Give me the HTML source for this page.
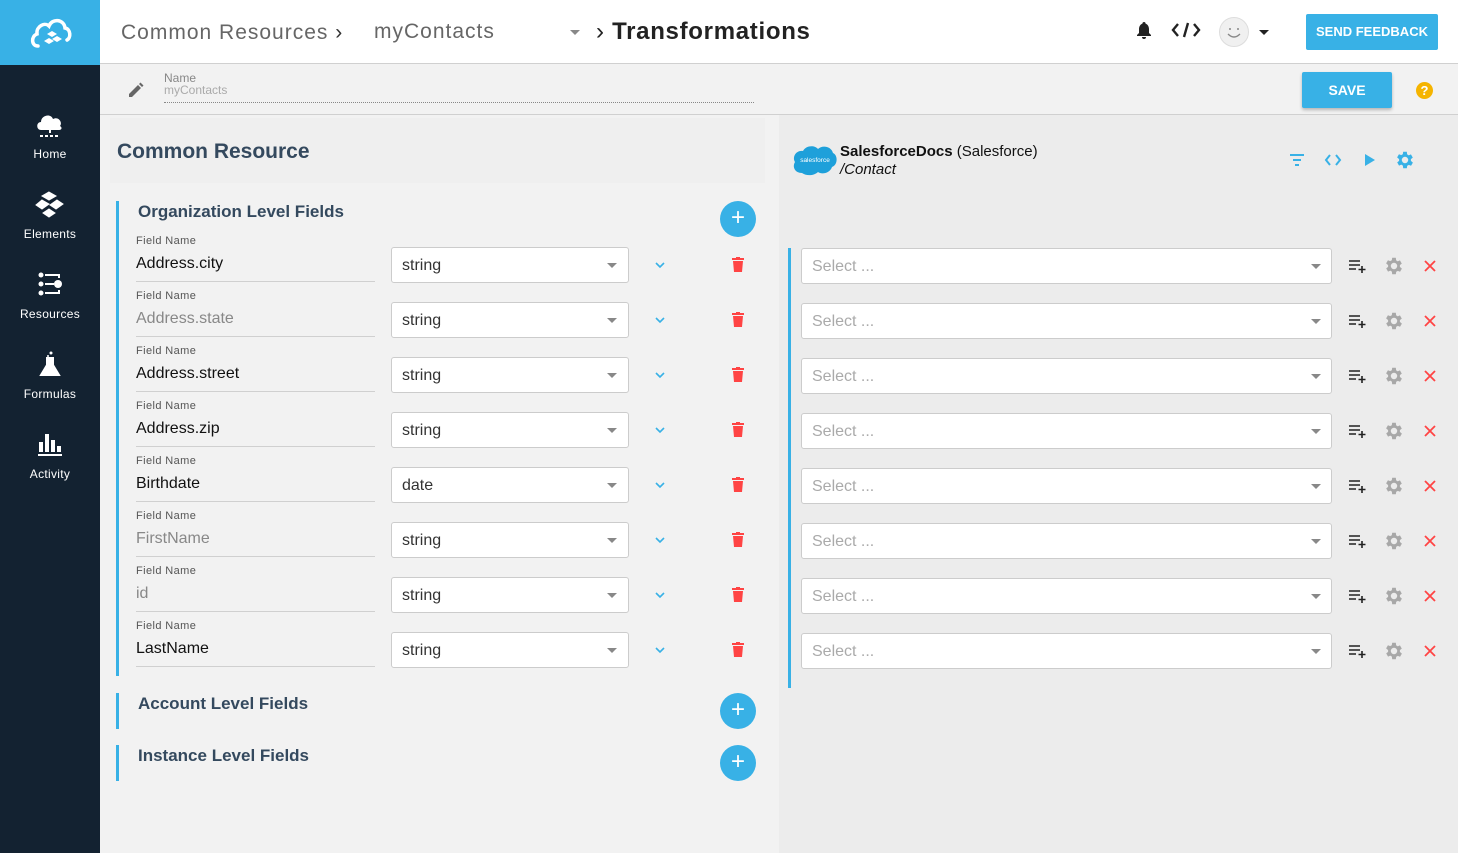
<!DOCTYPE html>
<html><head><meta charset="utf-8"><style>
*{box-sizing:border-box;margin:0;padding:0}
body{width:1458px;height:853px;overflow:hidden;font-family:"Liberation Sans",sans-serif;background:#f2f2f2;position:relative}
.a{position:absolute}
.side{left:0;top:0;width:100px;height:853px;background:#132231}
.logo{left:0;top:0;width:100px;height:65px;background:#38b1e6}
.nav{width:100px;text-align:center;color:#fff;font-size:12px;letter-spacing:.3px}
.hdr{left:100px;top:0;width:1358px;height:64px;background:#fff;border-bottom:1px solid #d0d0d0}
.btn{background:#38b1e6;color:#fff;font-weight:bold;font-size:14px;text-align:center;border-radius:2px}
.lbl{font-size:11px;color:#555;letter-spacing:.4px}
.val{font-size:16px;color:#111}
.ul{height:1px;background:#d0d0d0;width:239px}
.sel{background:#fff;border:1px solid #ccc;border-radius:3px;height:36px;font-size:16px;color:#333;padding:9px 10px}
.tri{width:0;height:0;border-left:5px solid transparent;border-right:5px solid transparent;border-top:5px solid #888}
.plus{width:36px;height:36px;border-radius:50%;background:#38b1e6;color:#fff;font-size:24px;line-height:34px;text-align:center}
.h3{font-size:17px;font-weight:bold;color:#34495e}
.bar{width:3px;background:#38b1e6}
</style></head><body>
<div class="a side"></div>
<div class="a logo"><svg class="a" style="left:30px;top:14px" width="42" height="38" viewBox="0 0 42 38"><path d="M8 32 C1 32 1 22 7 20 C6 12 15 8 19 12 C22 4 34 5 35 14 C41 15 41 24 37 26" fill="none" stroke="#fff" stroke-width="3.5" stroke-linecap="round"/><path d="M17 20 l5 -3 5 3 -5 3z M22 25 l5 -3 5 3 -5 3z M14 27 l5 -3 5 3 -5 3z" fill="#fff"/></svg></div>
<div class="a nav" style="top:110px"><svg width="30" height="30" viewBox="0 0 30 30"><path d="M6 20 C1 20 1 12 6 12 C6 5 16 3 18 9 C23 6 28 12 25 16 C28 18 26 20 24 20Z" fill="#fff"/><path d="M15 20v5M5 26h20" stroke="#fff" stroke-width="2" stroke-dasharray="3 2"/></svg><div style="margin-top:4px">Home</div></div>
<div class="a nav" style="top:190px"><svg width="30" height="30" viewBox="0 0 30 30"><path d="M14 2l7 4-7 4-7-4z M7 10l7 4-7 5-6-4z M22 10l6 4-7 5-6-4z M14 19l6 4-6 4-6-4z" fill="#fff" stroke="#fff" stroke-width="1"/></svg><div style="margin-top:4px">Elements</div></div>
<div class="a nav" style="top:270px"><svg width="30" height="30" viewBox="0 0 30 30"><circle cx="6" cy="5" r="2.5" fill="#fff"/><circle cx="6" cy="14" r="2.5" fill="#fff"/><circle cx="6" cy="23" r="2.5" fill="#fff"/><circle cx="23" cy="14" r="4" fill="#fff"/><path d="M10 5h14v3M10 14h9M10 23h14v-3" stroke="#fff" stroke-width="2" fill="none"/></svg><div style="margin-top:4px">Resources</div></div>
<div class="a nav" style="top:350px"><svg width="30" height="30" viewBox="0 0 30 30"><circle cx="16" cy="3" r="1.5" fill="#fff"/><circle cx="13" cy="6" r="1" fill="#fff"/><path d="M11 8h8M12 8v7l-6 10h18l-6-10v-7" fill="#fff" stroke="#fff" stroke-width="2"/></svg><div style="margin-top:4px">Formulas</div></div>
<div class="a nav" style="top:430px"><svg width="30" height="30" viewBox="0 0 30 30"><rect x="4" y="12" width="4" height="10" fill="#fff"/><rect x="10" y="4" width="4" height="18" fill="#fff"/><rect x="16" y="10" width="4" height="12" fill="#fff"/><rect x="22" y="16" width="4" height="6" fill="#fff"/><rect x="3" y="24" width="24" height="2" fill="#fff"/></svg><div style="margin-top:4px">Activity</div></div>

<div class="a hdr"></div>
<div class="a" style="left:121px;top:21px;font-size:21px;color:#666;letter-spacing:1px">Common Resources <span style="color:#333">›</span></div>
<div class="a" style="left:374px;top:20px;font-size:21px;color:#666;letter-spacing:1px">myContacts</div>
<div class="a tri" style="left:570px;top:30px;border-top-color:#888"></div>
<div class="a" style="left:596px;top:18px;font-size:24px;color:#222;font-weight:bold;letter-spacing:.7px"><span style="font-weight:normal">›</span> Transformations</div>
<svg class="a" style="left:1134px;top:20px" width="20" height="20" viewBox="0 0 20 20"><path d="M10 2a1.5 1.5 0 0 1 1.5 1.5C14 4.5 15 7 15 9v4l2 2v1H3v-1l2-2V9c0-2 1-4.5 3.5-5.5A1.5 1.5 0 0 1 10 2zM8 17h4a2 2 0 0 1-4 0z" fill="#222"/></svg>
<svg class="a" style="left:1171px;top:22px" width="30" height="16" viewBox="0 0 30 16"><path d="M7 2L2 8l5 6M23 2l5 6-5 6M17 1l-4 14" stroke="#222" stroke-width="2.4" fill="none"/></svg>
<div class="a" style="left:1219px;top:17px;width:30px;height:30px;border-radius:50%;background:#f0f0f0;border:1px solid #ddd"><svg width="28" height="28" viewBox="0 0 28 28"><circle cx="10" cy="11" r="1" fill="#888"/><circle cx="18" cy="11" r="1" fill="#888"/><path d="M8 16q6 6 12 0" stroke="#888" fill="none" stroke-width="1.3"/></svg></div>
<div class="a tri" style="left:1259px;top:30px;border-top-color:#222"></div>
<div class="a btn" style="left:1306px;top:14px;width:132px;height:36px;line-height:36px;font-size:13px">SEND FEEDBACK</div>

<div class="a" style="left:100px;top:65px;width:1358px;height:50px;background:#f2f2f2;border-bottom:1px solid #d0d0d0"></div>
<svg class="a" style="left:127px;top:81px" width="18" height="18" viewBox="0 0 18 18"><path d="M2 13v3h3l9-9-3-3z M12 3l3 3 1.5-1.5-3-3z" fill="#666"/></svg>
<div class="a" style="left:164px;top:71px;font-size:12px;color:#888">Name</div>
<div class="a" style="left:164px;top:83px;font-size:12px;color:#aaa">myContacts</div>
<div class="a" style="left:164px;top:102px;width:590px;border-top:1px dotted #888"></div>
<div class="a btn" style="left:1302px;top:72px;width:90px;height:36px;line-height:36px;box-shadow:0 2px 3px rgba(0,0,0,.25)">SAVE</div>
<div class="a" style="left:1416px;top:82px;width:17px;height:17px;border-radius:50%;background:#f5b400;color:#fff;font-size:13px;font-weight:bold;text-align:center;line-height:17px">?</div>

<div class="a" style="left:779px;top:115px;width:679px;height:738px;background:#ececec"></div>
<div class="a" style="left:110px;top:118px;width:655px;height:65px;background:#efefef"></div>
<div class="a" style="left:117px;top:140px;font-size:21px;font-weight:bold;color:#34495e">Common Resource</div>

<div class="a bar" style="left:116px;top:201px;height:475px"></div>
<div class="a h3" style="left:138px;top:202px">Organization Level Fields</div>
<div class="a plus" style="left:720px;top:201px">+</div>
<div class="a bar" style="left:116px;top:693px;height:36px"></div>
<div class="a h3" style="left:138px;top:694px">Account Level Fields</div>
<div class="a plus" style="left:720px;top:693px">+</div>
<div class="a bar" style="left:116px;top:745px;height:36px"></div>
<div class="a h3" style="left:138px;top:746px">Instance Level Fields</div>
<div class="a plus" style="left:720px;top:745px">+</div>

<svg class="a" style="left:792px;top:143px" width="46" height="34" viewBox="0 0 46 34"><path d="M10 30C3 30 0 24 3 19 0 14 4 7 11 8 14 2 23 2 26 6 30 2 39 3 41 10 46 12 46 22 40 24 38 30 30 32 26 29 22 33 14 33 10 30Z" fill="#1ea0da"/><text x="23" y="19" font-size="6.5" fill="#fff" text-anchor="middle" font-family="Liberation Sans">salesforce</text></svg>
<div class="a" style="left:840px;top:143px;font-size:15px;color:#111"><b>SalesforceDocs</b> (Salesforce)</div>
<div class="a" style="left:840px;top:161px;font-size:15px;color:#111;font-style:italic">/Contact</div>
<svg class="a" style="left:1289px;top:152px" width="16" height="16" viewBox="0 0 16 16"><path d="M1 3h14M4 8h8M6 13h4" stroke="#38b1e6" stroke-width="2"/></svg>
<svg class="a" style="left:1324px;top:152px" width="18" height="16" viewBox="0 0 18 16"><path d="M6 3L2 8l4 5M12 3l4 5-4 5" stroke="#38b1e6" stroke-width="2" fill="none"/></svg>
<svg class="a" style="left:1363px;top:152px" width="14" height="16" viewBox="0 0 14 16"><path d="M2 2l10 6-10 6z" fill="#38b1e6"/></svg>
<svg class="a" style="left:1394px;top:149px" width="22" height="22" viewBox="0 0 24 24"><path d="M19.4 13a7.5 7.5 0 0 0 0-2l2.1-1.6-2-3.5-2.5 1a7 7 0 0 0-1.7-1L15 3h-4l-.4 2.7a7 7 0 0 0-1.7 1l-2.5-1-2 3.5L6.6 11a7.5 7.5 0 0 0 0 2l-2.1 1.6 2 3.5 2.5-1a7 7 0 0 0 1.7 1L11 21h4l.4-2.7a7 7 0 0 0 1.7-1l2.5 1 2-3.5zM13 15.5a3.5 3.5 0 1 1 0-7 3.5 3.5 0 0 1 0 7z" fill="#38b1e6" transform="translate(-1 0)"/></svg>
<div class="a bar" style="left:788px;top:248px;height:440px"></div>

<div id="rows"></div>
<script>
var G='<path d="M19.4 13a7.5 7.5 0 0 0 0-2l2.1-1.6-2-3.5-2.5 1a7 7 0 0 0-1.7-1L15 3h-4l-.4 2.7a7 7 0 0 0-1.7 1l-2.5-1-2 3.5L6.6 11a7.5 7.5 0 0 0 0 2l-2.1 1.6 2 3.5 2.5-1a7 7 0 0 0 1.7 1L11 21h4l.4-2.7a7 7 0 0 0 1.7-1l2.5 1 2-3.5zM13 15.5a3.5 3.5 0 1 1 0-7 3.5 3.5 0 0 1 0 7z" fill="#a8a8a8" transform="translate(-1 0)"/>';
var f=[["Address.city","string",0],["Address.state","string",1],["Address.street","string",0],["Address.zip","string",0],["Birthdate","date",0],["FirstName","string",1],["id","string",1],["LastName","string",0]];
var h="";
f.forEach(function(r,i){var y=241+i*55;
h+='<div class="a lbl" style="left:136px;top:'+(y-6)+'px">Field Name</div>';
h+='<div class="a val" style="left:136px;top:'+(y+14)+'px;color:'+(r[2]?'#888':'#111')+'">'+r[0]+'</div>';
h+='<div class="a ul" style="left:136px;top:'+(y+40)+'px"></div>';
h+='<div class="a sel" style="left:391px;top:'+(y+6)+'px;width:238px">'+r[1]+'</div>';
h+='<div class="a tri" style="left:607px;top:'+(y+22)+'px"></div>';
h+='<svg class="a" style="left:654px;top:'+(y+20)+'px" width="12" height="8" viewBox="0 0 12 8"><path d="M2 2l4 4 4-4" stroke="#38b1e6" stroke-width="1.6" fill="none"/></svg>';
h+='<svg class="a" style="left:732px;top:'+(y+16)+'px" width="12" height="15" viewBox="0 0 12 15"><path d="M4 0h4v1h4v2H0V1h4z M1 4h10l-1 11H2z" fill="#f44"/></svg>';
var z=y+7;
h+='<div class="a sel" style="left:801px;top:'+z+'px;width:531px;color:#aaa">Select ...</div>';
h+='<div class="a tri" style="left:1311px;top:'+(z+16)+'px"></div>';
h+='<svg class="a" style="left:1349px;top:'+(z+11)+'px" width="18" height="14" viewBox="0 0 18 14"><path d="M0 2h11M0 6h11M0 10h7M13 7v7M9.5 10.5h7" stroke="#222" stroke-width="1.6"/></svg>';
h+='<svg class="a" style="left:1383px;top:'+(z+7)+'px" width="22" height="22" viewBox="0 0 24 24">'+G+'</svg>';
h+='<svg class="a" style="left:1424px;top:'+(z+12)+'px" width="12" height="12" viewBox="0 0 12 12"><path d="M1 1l10 10M11 1L1 11" stroke="#f44" stroke-width="1.8"/></svg>';
});
document.getElementById("rows").innerHTML=h;
</script>
</body></html>
